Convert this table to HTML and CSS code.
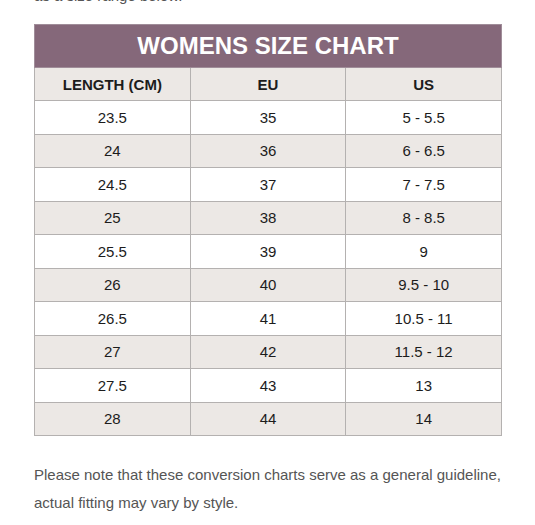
FILE: index.html
```html
<!DOCTYPE html>
<html>
<head>
    <meta charset="UTF-8">
    <title>Womens Size Chart</title>
    <link rel="stylesheet" href="styles.css">
</head>
<body>
    <div class="page">
        <p class="intro">as a size range below.</p>

        <table class="size-chart">
            <thead>
                <tr>
                    <th class="chart-title" colspan="3">WOMENS SIZE CHART</th>
                </tr>
                <tr class="col-heads">
                    <th>LENGTH (CM)</th>
                    <th>EU</th>
                    <th>US</th>
                </tr>
            </thead>
            <tbody>
                <tr><td>23.5</td><td>35</td><td>5 - 5.5</td></tr>
                <tr><td>24</td><td>36</td><td>6 - 6.5</td></tr>
                <tr><td>24.5</td><td>37</td><td>7 - 7.5</td></tr>
                <tr><td>25</td><td>38</td><td>8 - 8.5</td></tr>
                <tr><td>25.5</td><td>39</td><td>9</td></tr>
                <tr><td>26</td><td>40</td><td>9.5 - 10</td></tr>
                <tr><td>26.5</td><td>41</td><td>10.5 - 11</td></tr>
                <tr><td>27</td><td>42</td><td>11.5 - 12</td></tr>
                <tr><td>27.5</td><td>43</td><td>13</td></tr>
                <tr><td>28</td><td>44</td><td>14</td></tr>
            </tbody>
        </table>

        <p class="note">Please note that these conversion charts serve as a general guideline, actual fitting may vary by style.</p>
    </div>
</body>
</html>
```

FILE: styles.css
```css
body {
    margin: 0;
    background-color: #fff;
    font-family: "Liberation Sans", Arial, sans-serif;
    color: #555;
}
.page {
    padding: 0 33px 0 34px;
}
.intro,
.note {
    font-size: 15px;
    line-height: 28px;
    margin: 0;
}
.intro {
    margin-top: -18px;
    margin-bottom: 14px;
}
.size-chart {
    width: 468px;
    border-collapse: collapse;
    table-layout: fixed;
    color: #1c1c1c;
    font-size: 15px;
}
.size-chart th,
.size-chart td {
    border: 1px solid #b4b1b0;
    text-align: center;
    padding: 0;
    height: 32.5px;
}
.chart-title {
    background-color: #85687a;
    color: #fff;
    font-size: 24px;
    height: 42px !important;
    border-color: #a08d99 !important;
}
.col-heads th {
    background-color: #ece8e5;
    font-weight: bold;
    height: 32px;
}
.size-chart tbody tr:nth-child(even) td {
    background-color: #ece8e5;
}
.note {
    margin-top: 25px;
}
```
